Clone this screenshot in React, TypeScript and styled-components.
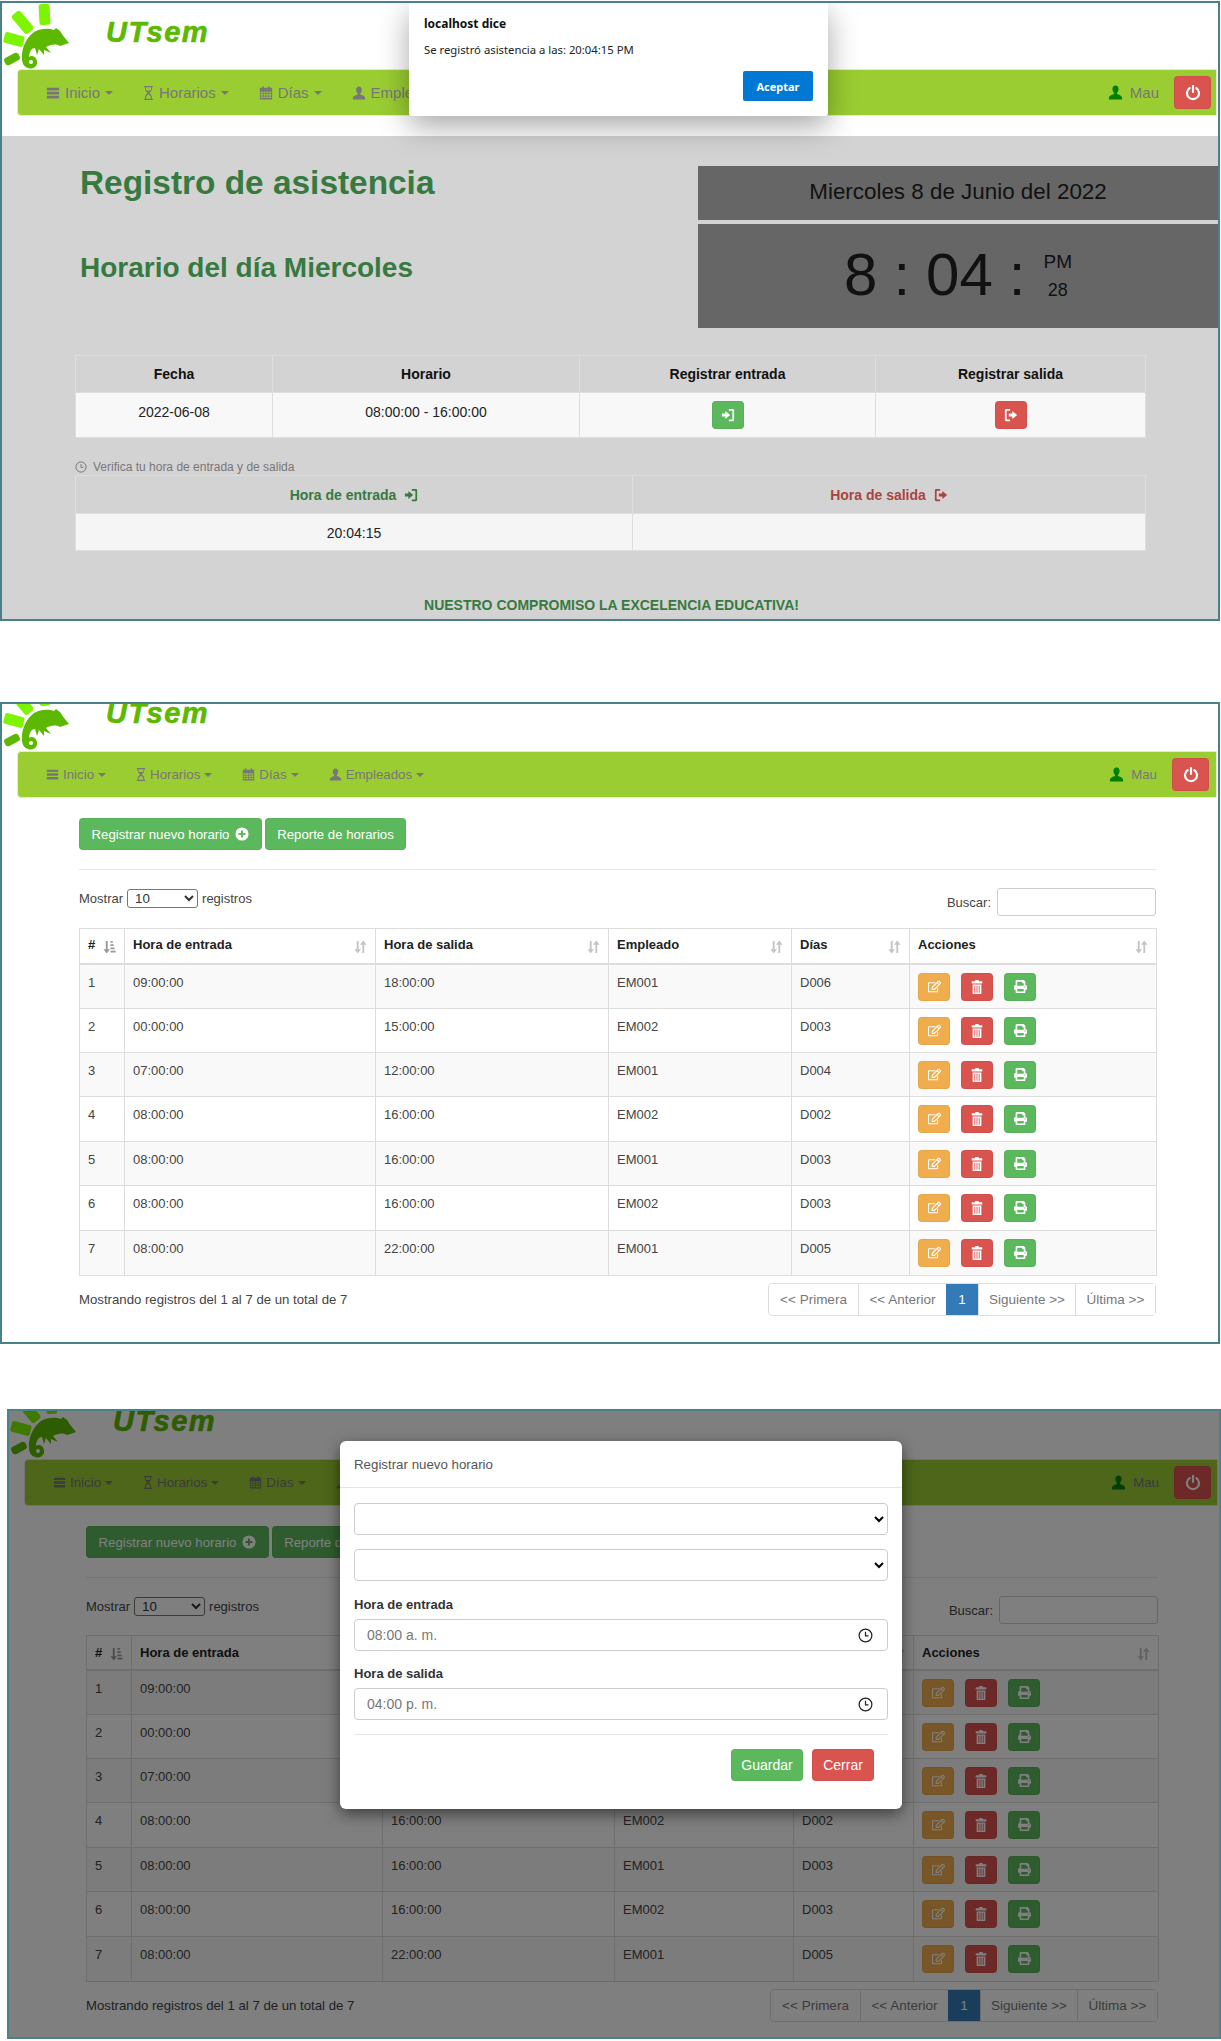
import React from "react";
import styled, { createGlobalStyle } from "styled-components";
import { FaPrint, FaRegEdit } from "react-icons/fa";

const Global = createGlobalStyle`
  html, body { margin: 0; padding: 0; background: #fff; }
  body { font-family: "Liberation Sans", Arial, sans-serif; font-size: 13px; color: #444; }
  * { box-sizing: border-box; }
`;

const Page = styled.div`
  width: 1221px;
  height: 2041px;
  overflow: hidden;
`;

const Frame = styled.section<{ $top: number; $left: number; $w: number; $h: number }>`
  position: relative;
  margin-top: ${p => p.$top}px;
  margin-left: ${p => p.$left}px;
  width: ${p => p.$w}px;
  height: ${p => p.$h}px;
  border: 2px solid #4a8088;
  overflow: hidden;
  background: #fff;
  display: flex;
  flex-direction: column;
`;

const Header = styled.header<{ $h: number }>`
  height: ${p => p.$h}px;
  flex: none;
`;

const Brand = styled.div<{ $shift: number }>`
  display: flex;
  align-items: flex-start;
  margin-top: ${p => p.$shift}px;
`;

const LogoSvg = styled.svg`
  flex: none;
  display: block;
  width: 72px;
  height: 68px;
`;

const BrandName = styled.span`
  margin: 13px 0 0 32px;
  font: italic bold 29px/32px "Liberation Sans", Arial, sans-serif;
  letter-spacing: 1.500px;
  color: #5cb800;
  -webkit-text-stroke: 0.600px #5cb800;
`;

const Logo = () => (
  <LogoSvg viewBox="0 0 72 68">
    <g transform="translate(-2,-2)">
      <rect x="39" y="3" width="11" height="21" rx="3" fill="#7df500" transform="rotate(-3 44 13)" />
      <rect x="17" y="9" width="11" height="24" rx="3" fill="#7df500" transform="rotate(-40 23 21)" />
      <rect x="4" y="33" width="20" height="11" rx="2" fill="#7df500" transform="rotate(15 14 38)" />
      <rect x="4" y="54" width="16" height="8" rx="3" fill="#5cb800" transform="rotate(-28 12 58)" />
      <path
        fill="#5cb800"
        d="M22 58C21 47 27 36 34 31C41 27 49 27 54 29L56 27L60 30C63 35 66 38 69 42L60 45C55 42 50 44 46 46L51 52L44 49L44 54L39 48L37 54L35 47C31 47 29 52 29 56C31 54 36 55 37 60C38 66 32 69 28 67C24 66 22 62 22 58Z"
      />
      <circle cx="31" cy="61" r="2" fill="#fff" />
    </g>
  </LogoSvg>
);

const Nav = styled.nav<{ $left: number; $size: number; $pr: number }>`
  flex: none;
  height: 47px;
  margin: 0 1px 0 ${p => p.$left}px;
  padding: 0 ${p => p.$pr}px 0 28px;
  display: flex;
  align-items: center;
  gap: 30px;
  background: #9acd32;
  border: 1px solid #e7e7e7;
  border-radius: 4px 0 0 4px;
  color: #777;
  font-size: ${p => p.$size}px;
`;

const NavItem = styled.span<{ $gap: number }>`
  display: flex;
  align-items: center;
  gap: ${p => p.$gap}px;
`;

const Caret = styled.i`
  width: 0;
  height: 0;
  margin-left: 0;
  border-left: 4px solid transparent;
  border-right: 4px solid transparent;
  border-top: 4px solid #777;
`;

const NavRight = styled.div`
  margin-left: auto;
  display: flex;
  align-items: center;
  gap: 15px;
`;

const UserBox = styled.span`
  display: flex;
  align-items: center;
  gap: 7px;
`;

const UserIcon = styled.span`
  color: #008000;
  display: flex;
`;

const Btn = styled.button<{ $c: string; $w?: number; $h?: number }>`
  flex: none;
  display: inline-flex;
  align-items: center;
  justify-content: center;
  gap: 6px;
  width: ${p => (p.$w ? `${p.$w}px` : "auto")};
  height: ${p => p.$h ?? 32}px;
  padding: 0;
  background: ${p => p.$c};
  border: 1px solid rgba(0, 0, 0, 0.04);
  border-radius: 4px;
  color: #fff;
  font: 13.200px "Liberation Sans", Arial, sans-serif;
`;

const FootBtn = styled(Btn)`
  font-size: 14px;
`;

const Ic = styled.svg<{ $s?: number; $w?: number }>`
  flex: none;
  display: block;
  width: ${p => p.$w ?? p.$s ?? 14}px;
  height: ${p => p.$s ?? 14}px;
  fill: currentColor;
`;

const MenuI = ({ s }: { s?: number }) => (
  <Ic $s={s} viewBox="0 0 16 16"><path d="M1 2h14v3H1zM1 6.600h14v3H1zM1 11.200h14v3H1z" /></Ic>
);
const HourI = ({ s }: { s: number }) => (
  <Ic $s={s} $w={Math.round(s * 0.75)} viewBox="2 0 12 16">
    <path fillRule="evenodd" d="M3 0h10v1.500h-1v2c0 2-2 3.400-3 4.500 1 1.100 3 2.500 3 4.500v2h1V16H3v-1.500h1v-2c0-2 2-3.400 3-4.500C6 6.900 4 5.500 4 3.500v-2H3zM5 1.500v2c0 .5.200 1 .5 1.500h5c.3-.5.500-1 .500-1.500v-2zM8 9.500c-1 1-2.500 2-2.900 3.500l-.1 1.500h6l-.1-1.500C10.500 11.500 9 10.500 8 9.500z" />
  </Ic>
);
const CalI = ({ s }: { s?: number }) => {
  const holes = [6.5, 9.2, 11.9]
    .flatMap(y => [2, 5.2, 8.4, 11.6].map(x => `M${x} ${y}h2.200v1.800h-2.200z`))
    .join("");
  return (
    <Ic $s={s} viewBox="0 0 16 16">
      <path fillRule="evenodd" d={`M1 2h2.500V.500h2V2h5V.500h2V2H15v13.500H1z${holes}`} />
    </Ic>
  );
};
const UserI = ({ s }: { s?: number }) => (
  <Ic $s={s} viewBox="0 0 16 16">
    <path d="M8 .500c2.200 0 3.300 1.700 3.300 3.800 0 1.600-.7 3.200-1.700 4.100v1.300c2 .9 5 1.600 5.400 3.600V15.500H1v-2.200c.4-2 3.400-2.700 5.400-3.600V8.400C5.400 7.500 4.700 5.900 4.700 4.300 4.700 2.200 5.800.500 8 .500z" />
  </Ic>
);
const PowerI = () => (
  <Ic $s={16} viewBox="0 0 16 16" style={{ fill: "none" }}>
    <path d="M8 1v6M4.600 3.200a6 6 0 1 0 6.800 0" stroke="#fff" strokeWidth="2.200" fill="none" strokeLinecap="round" />
  </Ic>
);
const LogInI = ({ s }: { s?: number }) => (
  <Ic $s={s} viewBox="0 0 16 16">
    <path d="M9 1h4.500A1.500 1.500 0 0 1 15 2.500v11a1.500 1.500 0 0 1-1.500 1.500H9v-2h3.500a.5.5 0 0 0 .5-.5v-9a.5.5 0 0 0-.5-.5H9z" />
    <path d="M1 6.300h4V3.500L10.500 8 5 12.500V9.700H1z" />
  </Ic>
);
const LogOutI = ({ s }: { s?: number }) => (
  <Ic $s={s} viewBox="0 0 16 16">
    <path d="M7 1H2.500A1.500 1.500 0 0 0 1 2.500v11A1.500 1.500 0 0 0 2.500 15H7v-2H3.500a.5.5 0 0 1-.5-.5v-9a.5.5 0 0 1 .5-.5H7z" />
    <path d="M5.500 6.300h4V3.500L15 8l-5.500 4.500V9.700h-4z" />
  </Ic>
);
const PlusI = () => (
  <Ic $s={14} viewBox="0 0 16 16">
    <path fillRule="evenodd" d="M8 .500a7.500 7.500 0 1 1 0 15 7.500 7.500 0 0 1 0-15zM6.800 4v2.800H4v2.400h2.800V12h2.400V9.200H12V6.800H9.200V4z" />
  </Ic>
);
const TrashI = () => (
  <Ic $s={14} viewBox="0 0 16 16">
    <path fillRule="evenodd" d="M6 0h4v1.500h4V4H2V1.500h4zM3 5h10v11H3zM5 6.500v8h1v-8zM7.500 6.500v8h1v-8zM10 6.500v8h1v-8z" />
  </Ic>
);
const ClockI = ({ s, c }: { s: number; c: string }) => (
  <svg width={s} height={s} viewBox="0 0 16 16" style={{ display: "block", flex: "none" }}>
    <circle cx="8" cy="8" r="6.800" fill="none" stroke={c} strokeWidth="1.300" />
    <path d="M8 4v4.500h3.200" fill="none" stroke={c} strokeWidth="1.300" />
  </svg>
);
const SortIcon = styled.svg<{ $c?: string }>`
  position: absolute;
  right: 8px;
  top: 11px;
  width: 13px;
  height: 14px;
  fill: ${p => p.$c ?? "#c4c4c4"};
`;
const SortI = () => (
  <SortIcon viewBox="0 0 14 15">
    <path d="M3 1h2v9h2.500L4 14.500.5 10H3zM9 14V5H6.500L10 .500 13.500 5H11v9z" />
  </SortIcon>
);
const SortAscI = () => (
  <SortIcon $c="#999" viewBox="0 0 14 15">
    <path d="M3 1h2v9h2.500L4 14.500.5 10H3zM8 1h2.500v2H8zM8 4.500h3.500v2H8zM8 8h4.500v2H8zM8 11.500h5.500v2H8z" />
  </SortIcon>
);

/* ---------- first panel ---------- */

const Dim = styled.div`
  flex: 1;
  margin-top: 20px;
  background: #d3d3d3;
  display: flex;
  flex-direction: column;
`;

const Hero = styled.div`
  flex: none;
  display: grid;
  grid-template-columns: 696px 1fr;
  padding-top: 30px;
`;

const Titles = styled.div`
  margin-top: -1px;
  padding-left: 78px;
  color: #377a3f;
`;

const H1 = styled.h1`
  margin: 0 0 50px;
  font: bold 33.400px/36px "Liberation Sans", Arial, sans-serif;
`;
const H2 = styled.h2`
  margin: 0;
  font: bold 28px/34px "Liberation Sans", Arial, sans-serif;
`;

const Clock = styled.div`
  display: flex;
  flex-direction: column;
  gap: 4px;
  color: #111;
`;

const DateBox = styled.div`
  height: 54px;
  padding-bottom: 3px;
  background: #666;
  display: flex;
  align-items: center;
  justify-content: center;
  font-size: 22.400px;
`;

const TimeBox = styled.div`
  height: 104px;
  padding: 0 0 2px 146px;
  background: #666;
  display: flex;
  align-items: center;
  font-size: 60px;
`;

const Big = styled.span`
  line-height: 1;
  margin-right: 16px;
`;

const Small = styled.div`
  margin-left: 2px;
  display: flex;
  flex-direction: column;
  align-items: center;
  gap: 7px;
`;
const SmallPM = styled.span`
  font-size: 19px;
  line-height: 22px;
`;
const Small28 = styled.span`
  font-size: 18px;
  line-height: 20px;
`;

const InfoTable = styled.table`
  table-layout: fixed;
  width: 1070px;
  margin-left: 73px;
  border-collapse: collapse;
  font-size: 14px;
  text-align: center;
  th, td { border: 1px solid #dedede; }
  th { height: 37px; font-weight: bold; color: #111; }
  td { background: #f8f8f8; color: #222; }
`;

const Col = styled.col<{ $w: number }>`
  width: ${p => p.$w}px;
`;

const CheckCell = styled.td`
  height: 45px;
  padding: 0 0 7px;
`;
const BtnCell = styled.td`
  height: 45px;
  padding: 0;
`;

const Hint = styled.div`
  margin: 21px 0 0 73px;
  height: 16px;
  display: flex;
  align-items: center;
  gap: 6px;
  font-size: 12px;
  color: #777;
`;

const CheckTable = styled(InfoTable)`
  th { height: 38px; }
  td { height: 37px; padding-top: 2px; background: #f5f5f5; }
`;

const HeadFlex = styled.span<{ $c: string }>`
  display: inline-flex;
  align-items: center;
  gap: 8px;
  color: ${p => p.$c};
`;

const Motto = styled.div`
  margin-top: auto;
  padding: 0 0 6px 3px;
  text-align: center;
  font-size: 14px;
  font-weight: bold;
  color: #377a3f;
`;

const Dialog = styled.div`
  position: absolute;
  left: 407px;
  top: 0;
  width: 419px;
  height: 113px;
  padding: 13px 15px;
  background: #fff;
  border-radius: 0 0 3px 3px;
  box-shadow: 0 10px 30px rgba(0, 0, 0, 0.35);
  font-family: "Noto Sans", "Open Sans", sans-serif;
  color: #222;
`;

const DialogTitle = styled.div`
  font-size: 12px;
  font-weight: bold;
  line-height: 16px;
  color: #111;
`;

const DialogText = styled.div`
  margin-top: 10px;
  font-size: 11.300px;
  line-height: 16px;
`;

const DialogBtn = styled.button`
  position: absolute;
  right: 15px;
  bottom: 15px;
  width: 70px;
  height: 30px;
  border: 0;
  border-radius: 2px;
  background: #0078d4;
  color: #fff;
  font: bold 11px "Noto Sans", "Open Sans", sans-serif;
`;

/* ---------- list page ---------- */

const Body = styled.div<{ $w: number }>`
  width: ${p => p.$w + 77}px;
  padding: 20px 0 0 77px;
`;

const Toolbar = styled.div`
  display: flex;
  gap: 3px;
  padding-bottom: 19px;
  border-bottom: 1px solid #e8e8e8;
`;

const Controls = styled.div<{ $h: number }>`
  height: ${p => p.$h}px;
  padding-top: 19px;
  display: flex;
  justify-content: space-between;
  align-items: flex-start;
`;

const ShowBox = styled.div`
  display: flex;
  align-items: center;
  gap: 4px;
  height: 19px;
  font-size: 13px;
`;

const SmallSelect = styled.select`
  width: 71px;
  height: 19px;
  padding: 0 0 0 3px;
  background: #fff;
  border: 1px solid #767676;
  border-radius: 3px;
  font: 13.300px "Liberation Sans", Arial, sans-serif;
  color: #333;
`;

const SearchBox = styled.div`
  display: flex;
  align-items: center;
  gap: 6px;
  height: 26px;
  font-size: 13px;
`;

const SearchInput = styled.input`
  width: 159px;
  height: 28px;
  background: #fff;
  border: 1px solid #ccc;
  border-radius: 3px;
`;

const DataTable = styled.table<{ $w: number; $head: number; $pb: number }>`
  table-layout: fixed;
  width: ${p => p.$w}px;
  border-collapse: collapse;
  font-size: 13px;
  th, td { border: 1px solid #ddd; text-align: left; }
  th {
    position: relative;
    height: ${p => p.$head}px;
    padding: 0 8px ${p => p.$pb}px;
    color: #222;
    font-weight: bold;
    border-bottom-width: 2px;
  }
  td { padding: 8px 8px 7px; vertical-align: top; line-height: 20px; }
`;

const Row = styled.tr`
  &:nth-child(odd) td { background: #f9f9f9; }
  &:nth-child(4) td, &:nth-child(6) td, &:nth-child(7) td { padding-bottom: 8px; }
`;

const Actions = styled.div`
  display: flex;
  gap: 11px;
  height: 28px;
`;

const TableFoot = styled.div`
  margin-top: 7px;
  display: flex;
  justify-content: space-between;
  align-items: center;
  font-size: 13.200px;
`;

const Pager = styled.div`
  display: flex;
  height: 33px;
  border: 1px solid #ddd;
  border-radius: 4px;
  color: #777;
  font-size: 13.500px;
`;

const PageCell = styled.span<{ $on?: boolean; $w: number }>`
  width: ${p => p.$w}px;
  display: flex;
  align-items: center;
  justify-content: center;
  border-left: ${p => (p.$on ? "0" : "1px solid #ddd")};
  background: ${p => (p.$on ? "#337ab7" : "#fff")};
  color: ${p => (p.$on ? "#fff" : "#777")};
  &:first-child { border-left: 0; border-radius: 4px 0 0 4px; }
`;

/* ---------- modal ---------- */

const Backdrop = styled.div`
  position: absolute;
  inset: 0;
  background: rgba(0, 0, 0, 0.5);
`;

const Modal = styled.div`
  position: absolute;
  left: 331px;
  top: 30px;
  width: 562px;
  height: 368px;
  background: #fff;
  border-radius: 6px;
  box-shadow: 0 5px 15px rgba(0, 0, 0, 0.5);
`;

const ModalHead = styled.div`
  height: 47px;
  padding-left: 14px;
  display: flex;
  align-items: center;
  border-bottom: 1px solid #e5e5e5;
  font-size: 13.300px;
  color: #555;
`;

const ModalBody = styled.div`
  padding: 15px 14px 0;
  display: flex;
  flex-direction: column;
`;

const FormSelect = styled.select`
  width: 100%;
  height: 32px;
  margin-bottom: 14px;
  padding: 0 8px;
  background: #fff;
  border: 1px solid #ccc;
  border-radius: 4px;
  & + label { margin-top: 1px; }
`;

const FormLabel = styled.label`
  font-size: 13px;
  font-weight: bold;
  line-height: 18px;
  margin-bottom: 5px;
  color: #333;
`;

const TimeField = styled.div`
  height: 32px;
  padding: 0 14px 0 12px;
  margin-bottom: 14px;
  display: flex;
  align-items: center;
  justify-content: space-between;
  border: 1px solid #ccc;
  border-radius: 4px;
  font-size: 14px;
  color: #777;
`;

const ModalFoot = styled.div`
  margin: 0 14px;
  padding: 14px 14px 0 0;
  border-top: 1px solid #e5e5e5;
  display: flex;
  justify-content: flex-end;
  gap: 9px;
`;

const rows = [
  ["1", "09:00:00", "18:00:00", "EM001", "D006"],
  ["2", "00:00:00", "15:00:00", "EM002", "D003"],
  ["3", "07:00:00", "12:00:00", "EM001", "D004"],
  ["4", "08:00:00", "16:00:00", "EM002", "D002"],
  ["5", "08:00:00", "16:00:00", "EM001", "D003"],
  ["6", "08:00:00", "16:00:00", "EM002", "D003"],
  ["7", "08:00:00", "22:00:00", "EM001", "D005"],
];

const NavBar = ({ left, size, pr, icon, gap }: { left: number; size: number; pr: number; icon: number; gap: number }) => (
  <Nav $left={left} $size={size} $pr={pr}>
    <NavItem $gap={gap}><MenuI s={icon} />Inicio<Caret /></NavItem>
    <NavItem $gap={gap}><HourI s={icon} />Horarios<Caret /></NavItem>
    <NavItem $gap={gap}><CalI s={icon} />Días<Caret /></NavItem>
    <NavItem $gap={gap}><UserI s={icon} />Empleados<Caret /></NavItem>
    <NavRight>
      <UserBox><UserIcon><UserI s={15} /></UserIcon>Mau</UserBox>
      <Btn $c="#d9534f" $w={37} $h={33}><PowerI /></Btn>
    </NavRight>
  </Nav>
);

const ListPage = ({ cols, controls, head, pb }: { cols: number[]; controls: number; head: number; pb: number }) => {
  const w = cols.reduce((a, b) => a + b, 0);
  return (
    <Body $w={w}>
      <Toolbar>
        <Btn $c="#5cb85c" $w={183}>Registrar nuevo horario <PlusI /></Btn>
        <Btn $c="#5cb85c" $w={141}>Reporte de horarios</Btn>
      </Toolbar>
      <Controls $h={controls}>
        <ShowBox>
          Mostrar
          <SmallSelect defaultValue="10"><option>10</option></SmallSelect>
          registros
        </ShowBox>
        <SearchBox>Buscar: <SearchInput /></SearchBox>
      </Controls>
      <DataTable $w={w} $head={head} $pb={pb}>
        <colgroup>{cols.map((c, i) => <Col key={i} $w={c} />)}</colgroup>
        <thead>
          <tr>
            <th>#<SortAscI /></th>
            <th>Hora de entrada<SortI /></th>
            <th>Hora de salida<SortI /></th>
            <th>Empleado<SortI /></th>
            <th>Días<SortI /></th>
            <th>Acciones<SortI /></th>
          </tr>
        </thead>
        <tbody>
          {rows.map(r => (
            <Row key={r[0]}>
              {r.map((c, i) => <td key={i}>{c}</td>)}
              <td>
                <Actions>
                  <Btn $c="#f0ad4e" $w={32} $h={28}><FaRegEdit size={13} /></Btn>
                  <Btn $c="#d9534f" $w={32} $h={28}><TrashI /></Btn>
                  <Btn $c="#5cb85c" $w={32} $h={28}><FaPrint size={13} /></Btn>
                </Actions>
              </td>
            </Row>
          ))}
        </tbody>
      </DataTable>
      <TableFoot>
        <span>Mostrando registros del 1 al 7 de un total de 7</span>
        <Pager>
          <PageCell $w={89}>&lt;&lt; Primera</PageCell>
          <PageCell $w={88}>&lt;&lt; Anterior</PageCell>
          <PageCell $w={32} $on>1</PageCell>
          <PageCell $w={97}>Siguiente &gt;&gt;</PageCell>
          <PageCell $w={80}>Última &gt;&gt;</PageCell>
        </Pager>
      </TableFoot>
    </Body>
  );
};

export default function App() {
  return (
    <Page>
      <Global />
      <Frame $top={1} $left={0} $w={1220} $h={620}>
        <Header $h={66}>
          <Brand $shift={0}><Logo /><BrandName>UTsem</BrandName></Brand>
        </Header>
        <NavBar left={15} size={15} pr={5} icon={14} gap={5} />
        <Dim>
          <Hero>
            <Titles>
              <H1>Registro de asistencia</H1>
              <H2>Horario del día Miercoles</H2>
            </Titles>
            <Clock>
              <DateBox>Miercoles 8 de Junio del 2022</DateBox>
              <TimeBox>
                <Big>8</Big><Big>:</Big><Big>04</Big><Big>:</Big>
                <Small>
                  <SmallPM>PM</SmallPM>
                  <Small28>28</Small28>
                </Small>
              </TimeBox>
            </Clock>
          </Hero>
          <InfoTable style={{ marginTop: 27 }}>
            <colgroup><Col $w={197} /><Col $w={307} /><Col $w={296} /><Col $w={270} /></colgroup>
            <thead>
              <tr><th>Fecha</th><th>Horario</th><th>Registrar entrada</th><th>Registrar salida</th></tr>
            </thead>
            <tbody>
              <tr>
                <CheckCell>2022-06-08</CheckCell>
                <CheckCell>08:00:00 - 16:00:00</CheckCell>
                <BtnCell><Btn $c="#5cb85c" $w={32} $h={28}><LogInI s={14} /></Btn></BtnCell>
                <BtnCell><Btn $c="#d9534f" $w={32} $h={28}><LogOutI s={14} /></Btn></BtnCell>
              </tr>
            </tbody>
          </InfoTable>
          <Hint><ClockI s={12} c="#777" />Verifica tu hora de entrada y de salida</Hint>
          <CheckTable>
            <colgroup><Col $w={557} /><Col $w={513} /></colgroup>
            <thead>
              <tr>
                <th><HeadFlex $c="#377a3f">Hora de entrada <LogInI s={14} /></HeadFlex></th>
                <th><HeadFlex $c="#a94442">Hora de salida <LogOutI s={14} /></HeadFlex></th>
              </tr>
            </thead>
            <tbody>
              <tr><td>20:04:15</td><td></td></tr>
            </tbody>
          </CheckTable>
          <Motto>NUESTRO COMPROMISO LA EXCELENCIA EDUCATIVA!</Motto>
        </Dim>
        <Dialog>
          <DialogTitle>localhost dice</DialogTitle>
          <DialogText>Se registró asistencia a las: 20:04:15 PM</DialogText>
          <DialogBtn>Aceptar</DialogBtn>
        </Dialog>
      </Frame>

      <Frame $top={81} $left={0} $w={1220} $h={642}>
        <Header $h={47}>
          <Brand $shift={-20}><Logo /><BrandName>UTsem</BrandName></Brand>
        </Header>
        <NavBar left={15} size={13.3} pr={7} icon={13} gap={4} />
        <ListPage controls={58} head={35} pb={2} cols={[45, 251, 233, 183, 118, 247]} />
      </Frame>

      <Frame $top={65} $left={7} $w={1214} $h={630}>
        <Header $h={48}>
          <Brand $shift={-19}><Logo /><BrandName>UTsem</BrandName></Brand>
        </Header>
        <NavBar left={15} size={13.3} pr={6} icon={13} gap={4} />
        <ListPage controls={57} head={34} pb={0} cols={[45, 251, 232, 179, 120, 245]} />
        <Backdrop />
        <Modal>
          <ModalHead>Registrar nuevo horario</ModalHead>
          <ModalBody>
            <FormSelect />
            <FormSelect />
            <FormLabel>Hora de entrada</FormLabel>
            <TimeField>08:00 a. m.<ClockI s={15} c="#222" /></TimeField>
            <FormLabel>Hora de salida</FormLabel>
            <TimeField>04:00 p. m.<ClockI s={15} c="#222" /></TimeField>
          </ModalBody>
          <ModalFoot>
            <FootBtn $c="#5cb85c" $w={72}>Guardar</FootBtn>
            <FootBtn $c="#d9534f" $w={62}>Cerrar</FootBtn>
          </ModalFoot>
        </Modal>
      </Frame>
    </Page>
  );
}
